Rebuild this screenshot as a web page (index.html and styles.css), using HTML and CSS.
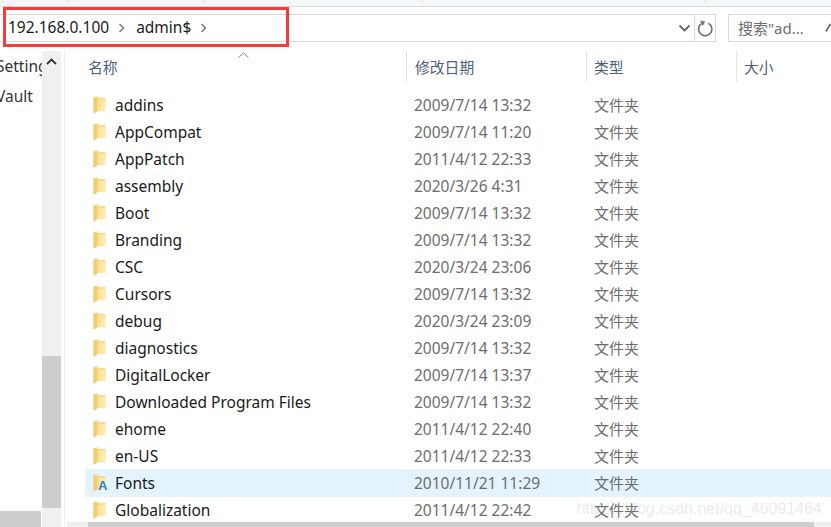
FILE: index.html
```html
<!DOCTYPE html>
<html lang="zh">
<head>
<meta charset="utf-8">
<title>admin$</title>
<link rel="stylesheet" href="styles.css">
</head>
<body>
<svg class="defs" width="0" height="0" aria-hidden="true">
  <defs>
    <linearGradient id="fg" x1="0" y1="0" x2="1" y2="0">
      <stop offset="0" stop-color="#fbe08f"/>
      <stop offset="1" stop-color="#fdeeb8"/>
    </linearGradient>
    <symbol id="folder" viewBox="0 0 13 18">
      <path d="M0.5 1 L5.5 0.2 V2 H12.5 V15 H4 L0.5 17.8 Z" fill="#f8dc8c"/>
      <path d="M0.5 1 L4.5 2.5 V15.5 L0.5 17.8 Z" fill="#f1cc72"/>
      <path d="M4.5 4 H12.5 V15 H4.5 Z" fill="url(#fg)"/>
    </symbol>
  </defs>
</svg>
<div class="app">
  <div class="topband">
    <span class="tick t1"></span><span class="tick t2"></span><span class="tick t3"></span><span class="tick t4"></span>
  </div>
  <div class="barrow">
    <div class="address">
      <span class="crumb">192.168.0.100</span>
      <svg class="chev" width="7" height="10" viewBox="0 0 7 10"><path d="M1.5 1 L5.5 5 L1.5 9" fill="none" stroke="#7a7a7a" stroke-width="1.6"/></svg>
      <span class="crumb">admin$</span>
      <svg class="chev" width="7" height="10" viewBox="0 0 7 10"><path d="M1.5 1 L5.5 5 L1.5 9" fill="none" stroke="#7a7a7a" stroke-width="1.6"/></svg>
      <span class="grow"></span>
      <svg class="drop" width="13" height="8" viewBox="0 0 13 8"><path d="M1.5 1.5 L6.5 6.5 L11.5 1.5" fill="none" stroke="#666" stroke-width="1.8"/></svg>
      <span class="refresh">
        <svg width="16" height="17" viewBox="0 0 16 17"><path d="M5.2 3.3 A6.6 6.6 0 1 0 11.2 3.3" fill="none" stroke="#777" stroke-width="1.7"/><path d="M3 0.6 L8.2 1.4 L5.8 6 Z" fill="#777"/></svg>
      </span>
    </div>
    <div class="search">
      <span>搜索"ad...</span>
      <svg class="lens" width="6" height="10" viewBox="0 0 6 10"><path d="M5.5 1 L0.8 8.5" fill="none" stroke="#666" stroke-width="1.6"/></svg>
    </div>
  </div>
  <div class="main">
    <aside class="nav">
      <div class="navlist">
        <div class="navitem">Setting</div>
        <div class="navitem">Vault</div>
        <div class="hscroll-nav"></div>
      </div>
      <div class="vscroll">
        <svg class="uparrow" width="11" height="7" viewBox="0 0 11 7"><path d="M1 6 L5.5 1.5 L10 6" fill="none" stroke="#333" stroke-width="1.8"/></svg>
        <div class="thumb"></div>
      </div>
    </aside>
    <section class="list">
      <div class="sort"><svg width="11" height="6" viewBox="0 0 11 6"><path d="M0.5 5.5 L5.5 0.8 L10.5 5.5" fill="none" stroke="#8a8a8a"/></svg></div>
      <div class="head">
        <div class="hc c-name">名称</div>
        <div class="hc c-date">修改日期</div>
        <div class="hc c-type">类型</div>
        <div class="hc c-size">大小</div>
      </div>
      <div class="rows">
        <div class="row"><span class="n"><svg class="fi"><use href="#folder"/></svg>addins</span><span class="d">2009/7/14 13:32</span><span class="k">文件夹</span></div>
        <div class="row"><span class="n"><svg class="fi"><use href="#folder"/></svg>AppCompat</span><span class="d">2009/7/14 11:20</span><span class="k">文件夹</span></div>
        <div class="row"><span class="n"><svg class="fi"><use href="#folder"/></svg>AppPatch</span><span class="d">2011/4/12 22:33</span><span class="k">文件夹</span></div>
        <div class="row"><span class="n"><svg class="fi"><use href="#folder"/></svg>assembly</span><span class="d">2020/3/26 4:31</span><span class="k">文件夹</span></div>
        <div class="row"><span class="n"><svg class="fi"><use href="#folder"/></svg>Boot</span><span class="d">2009/7/14 13:32</span><span class="k">文件夹</span></div>
        <div class="row"><span class="n"><svg class="fi"><use href="#folder"/></svg>Branding</span><span class="d">2009/7/14 13:32</span><span class="k">文件夹</span></div>
        <div class="row"><span class="n"><svg class="fi"><use href="#folder"/></svg>CSC</span><span class="d">2020/3/24 23:06</span><span class="k">文件夹</span></div>
        <div class="row"><span class="n"><svg class="fi"><use href="#folder"/></svg>Cursors</span><span class="d">2009/7/14 13:32</span><span class="k">文件夹</span></div>
        <div class="row"><span class="n"><svg class="fi"><use href="#folder"/></svg>debug</span><span class="d">2020/3/24 23:09</span><span class="k">文件夹</span></div>
        <div class="row"><span class="n"><svg class="fi"><use href="#folder"/></svg>diagnostics</span><span class="d">2009/7/14 13:32</span><span class="k">文件夹</span></div>
        <div class="row"><span class="n"><svg class="fi"><use href="#folder"/></svg>DigitalLocker</span><span class="d">2009/7/14 13:37</span><span class="k">文件夹</span></div>
        <div class="row"><span class="n"><svg class="fi"><use href="#folder"/></svg>Downloaded Program Files</span><span class="d">2009/7/14 13:32</span><span class="k">文件夹</span></div>
        <div class="row"><span class="n"><svg class="fi"><use href="#folder"/></svg>ehome</span><span class="d">2011/4/12 22:40</span><span class="k">文件夹</span></div>
        <div class="row"><span class="n"><svg class="fi"><use href="#folder"/></svg>en-US</span><span class="d">2011/4/12 22:33</span><span class="k">文件夹</span></div>
        <div class="row hl"><span class="n"><span class="fontfi"><svg class="fi"><use href="#folder"/></svg><span class="fa">A</span></span>Fonts</span><span class="d">2010/11/21 11:29</span><span class="k">文件夹</span></div>
        <div class="row"><span class="n"><svg class="fi"><use href="#folder"/></svg>Globalization</span><span class="d">2011/4/12 22:42</span><span class="k">文件夹</span></div>
      </div>
      <div class="hbar"><div class="hthumb"></div></div>
    </section>
  </div>
  <div class="redbox"></div>
  <div class="watermark">https://blog.csdn.net/qq_46091464</div>
</div>
</body>
</html>
```
FILE: styles.css
```css
* { box-sizing: border-box; }
html, body { margin: 0; height: 100%; background: #fff; overflow: hidden; }
body { font-family: "Noto Sans", "Noto Sans CJK SC", sans-serif; font-size: 15.5px; color: #1a1a1a; }
.defs { position: absolute; }
.app { position: relative; width: 831px; height: 527px; overflow: hidden; display: flex; flex-direction: column; }

.topband { height: 7px; flex: none; background: #f5f6f7; border-bottom: 1px solid #dcdcdc; position: relative; }
.tick { position: absolute; top: 0; width: 1px; height: 3px; background: #e2e2e2; }
.t1 { left: 67px; }
.t2 { left: 204px; }
.t3 { left: 422px; }
.t4 { left: 704px; }

.barrow { flex: none; display: flex; padding-top: 7px; height: 44px; }
.address { width: 716px; height: 28px; border: 1px solid #d9d9d9; border-left: 0; display: flex; align-items: center; padding-left: 8px; }
.crumb { line-height: 24px; padding-bottom: 2px; color: #1a1a1a; }
.chev { margin: 0 11px 0 9px; flex: none; }
.grow { flex: 1; }
.drop { margin-right: 3px; flex: none; }
.refresh { width: 21px; height: 26px; border-left: 1px solid #d9d9d9; display: flex; align-items: center; justify-content: center; }
.search { margin-left: 12px; flex: 1; height: 28px; border: 1px solid #d9d9d9; border-right: 0; padding-left: 9px; padding-right: 0; line-height: 26px; color: #6d6d6d; font-size: 15px; white-space: nowrap; display: flex; align-items: center; justify-content: space-between; }

.main { flex: 1; display: flex; min-height: 0; }
.nav { width: 65px; flex: none; display: flex; border-right: 1px solid #f0f0f0; position: relative; padding-right: 3px; }
.navlist { width: 42px; position: relative; overflow: hidden; }
.navitem { height: 30px; line-height: 30px; margin-left: -4px; white-space: nowrap; color: #333; }
.hscroll-nav { position: absolute; left: 0; bottom: 0; width: 41px; height: 16px; background: #cdcdcd; }
.vscroll { width: 19px; background: #f0f0f0; position: relative; }
.uparrow { position: absolute; left: 4px; top: 7px; }
.thumb { position: absolute; left: 0; right: 0; top: 305px; height: 152px; background: #cdcdcd; }

.list { flex: 1; min-width: 0; display: flex; flex-direction: column; position: relative; }
.sort { position: absolute; left: 173px; top: 1px; line-height: 0; }
.head { flex: none; display: flex; height: 40px; padding-left: 23px; }
.hc { height: 31px; padding-top: 1px; line-height: 30px; color: #4c607a; font-size: 14.8px; }
.head .c-date { border-left: 1px solid #e5e5e5; padding-left: 8px; }
.head .c-type, .head .c-size { border-left: 1px solid #e5e5e5; padding-left: 7px; }
.c-name { width: 318px; flex: none; }
.c-date { width: 180px; flex: none; }
.c-type { width: 150px; flex: none; }
.c-size { flex: 1; }

.rows { flex: 1; min-height: 0; overflow: hidden; margin-left: 20px; }
.row { height: 27px; display: flex; align-items: center; }
.row.hl { background: #e5f3ff; height: 28px; margin-bottom: -1px; padding-bottom: 1px; }
.n { width: 329px; flex: none; display: flex; align-items: center; color: #1a1a1a; white-space: nowrap; }
.d { width: 180px; flex: none; color: #6d6d6d; white-space: nowrap; }
.k { color: #6d6d6d; font-size: 15px; }
.fi { width: 13px; height: 18px; margin-right: 9px; flex: none; margin-left: 8px; }
.fontfi { position: relative; display: flex; }
.fa { position: absolute; left: 13px; top: 4px; font-size: 13px; font-weight: 700; color: #1c86d1; line-height: 16px; font-family: "Liberation Sans", sans-serif; }

.hbar { flex: none; height: 5px; background: #f0f0f0; margin-left: 2px; padding-left: 21px; padding-right: 17px; }
.hthumb { height: 100%; background: #cdcdcd; }

.redbox { position: absolute; left: 3px; top: 7px; width: 286px; height: 40px; border: 3px solid #f43c3c; }
.watermark { position: absolute; right: 9px; top: 500px; font-family: "Liberation Sans", sans-serif; font-size: 16px; color: rgba(170, 170, 170, 0.25); white-space: nowrap; }
```
